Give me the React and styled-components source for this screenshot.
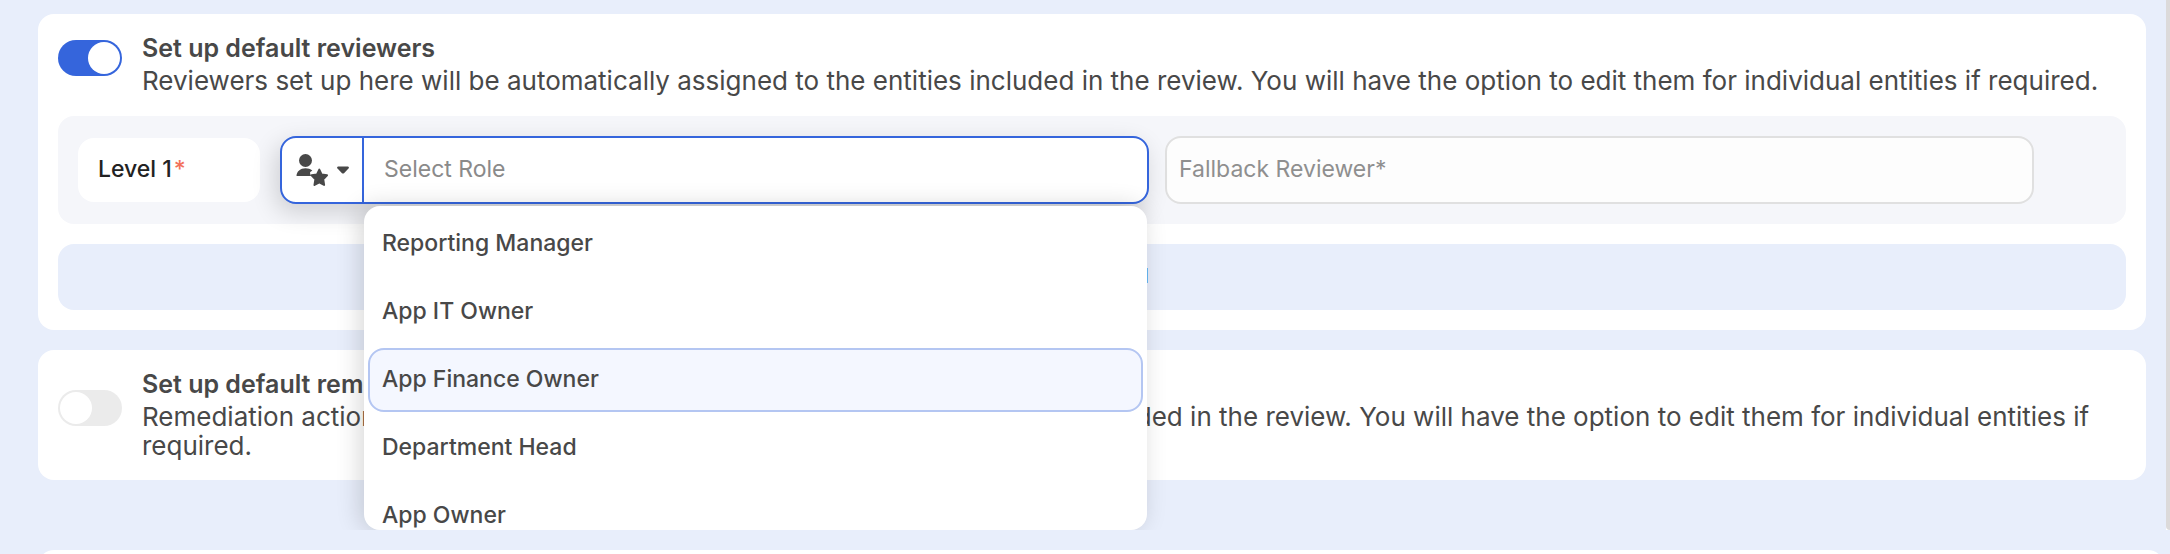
import styled, { createGlobalStyle } from "styled-components";

const roles = ["Reporting Manager", "App IT Owner", "App Finance Owner", "Department Head", "App Owner"];

const App = () => {
    return (
        <Page>
            <GlobalStyle />
            <ScrollArea>
                <Card>
                    <CardHeader>
                        <Toggle id="reviewers" defaultChecked />
                        <div>
                            <Title htmlFor="reviewers">Set up default reviewers</Title>
                            <Description>
                                Reviewers set up here will be automatically assigned to the entities included in the review. You will have the option to edit them for individual entities if required.
                            </Description>
                        </div>
                    </CardHeader>
                    <LevelPanel>
                        <LevelName>Level 1<Required>*</Required></LevelName>
                        <Fields>
                            <RoleField>
                                <TypeButton type="button" aria-label="Reviewer type">
                                    <UserStarIcon />
                                    <CaretIcon />
                                </TypeButton>
                                <RoleInput aria-label="Select Role" placeholder="Select Role" />
                                <Menu role="listbox">
                                    {roles.map((role) => (
                                        <Option key={role} role="option" aria-selected={role === "App Finance Owner"} $active={role === "App Finance Owner"}>
                                            {role}
                                        </Option>
                                    ))}
                                </Menu>
                            </RoleField>
                            <FallbackInput aria-label="Fallback Reviewer" placeholder="Fallback Reviewer*" />
                        </Fields>
                    </LevelPanel>
                    <AddButton type="button">+ Add Level</AddButton>
                </Card>
                <Card>
                    <CardHeader $center>
                        <Toggle id="remediations" />
                        <div>
                            <Title htmlFor="remediations">Set up default remediations</Title>
                            <Description>
                                Remediation action set up here will be automatically assigned to the entities included in the review. You will have the option to edit them for individual entities if required.
                            </Description>
                        </div>
                    </CardHeader>
                </Card>
                <ScrollTrack>
                    <ScrollThumb />
                </ScrollTrack>
            </ScrollArea>
            <Footer />
        </Page>
    );
};

const Toggle = (props) => <Switch type="checkbox" role="switch" {...props} />;

const UserStarIcon = () => (
    <svg width="32" height="36" viewBox="0 0 32 36" fill="#484848" aria-hidden="true">
        <circle cx="9.500" cy="8.500" r="6.500" />
        <path d="M0.500 24C0.500 19.500 4.500 16.200 9.500 16.200C12 16.200 14.500 17 16.300 18.500L15 19.500C13.500 20 14 21.500 15 24Z" />
        <path d="M23.300 17.600L25.700 22.600L31 23.300L27.200 27.200L28.100 32.900L23.300 30.300L18.500 32.900L19.400 27.200L15.600 23.300L20.900 22.600Z" stroke="#484848" strokeWidth="2" strokeLinejoin="round" />
    </svg>
);

const CaretIcon = () => (
    <svg width="14" height="8" viewBox="0 0 14 8" fill="#484848" aria-hidden="true">
        <path d="M2 0.500H12Q13.800 1 12.500 2.500L8 7.200Q7 8 6 7.200L1.500 2.500Q0.200 1 2 0.500Z" />
    </svg>
);

export default App;

const GlobalStyle = createGlobalStyle`
    * {
        box-sizing: border-box;
    }

    body {
        margin: 0;
        background-color: #e8eefb;
        color: #484848;
        font-family: Inter, sans-serif;
    }

    input, button {
        font: inherit;
        color: inherit;
    }
`;

const Page = styled.div`
    height: 100vh;
    display: flex;
    flex-direction: column;
    overflow: hidden;
`;

const ScrollArea = styled.main`
    position: relative;
    flex: 1;
    min-height: 0;
    overflow: hidden;
    display: flex;
    flex-direction: column;
    gap: 20px;
    padding: 14px 24px 0 38px;
`;

const ScrollTrack = styled.div`
    position: absolute;
    top: 0;
    bottom: 0;
    right: 0;
    width: 4px;
    background-color: white;
`;

const ScrollThumb = styled.div`
    height: 100%;
    border-radius: 0 0 0 6px;
    background-color: #dcdada;
`;

const Card = styled.section`
    flex-shrink: 0;
    background-color: white;
    border-radius: 16px;
    padding: 20px;
`;

const CardHeader = styled.div`
    display: flex;
    align-items: ${(props) => (props.$center ? "center" : "flex-start")};
    gap: 20px;
    padding-bottom: ${(props) => (props.$center ? "0" : "20px")};
`;

const Switch = styled.input`
    appearance: none;
    flex-shrink: 0;
    width: 64px;
    height: 36px;
    margin: 6px 0 20px;
    padding: 2px;
    border-radius: 18px;
    background-color: #ebebeb;
    display: flex;

    &::before {
        content: "";
        width: 32px;
        height: 32px;
        border-radius: 50%;
        background-color: white;
    }

    &:checked {
        background-color: #3565dc;
        justify-content: flex-end;
    }
`;

const Title = styled.label`
    display: block;
    font-size: 25px;
    font-weight: 600;
    line-height: 28px;
`;

const Description = styled.p`
    margin: 4px 0 0;
    font-size: 26px;
    line-height: 29px;
`;

const LevelPanel = styled.div`
    display: flex;
    align-items: center;
    gap: 20px;
    padding: 20px 92px 20px 20px;
    border-radius: 16px;
    background-color: #f5f6fa;
`;

const LevelName = styled.div`
    width: 182px;
    height: 64px;
    padding: 0 20px 2px;
    display: flex;
    align-items: center;
    border-radius: 16px;
    background-color: white;
    color: #222222;
    font-size: 23px;
    font-weight: 500;
`;

const Required = styled.span`
    margin-left: 2px;
    color: #f2715a;
`;

const Fields = styled.div`
    flex: 1;
    display: grid;
    grid-template-columns: 1fr 1fr;
    gap: 16px;
`;

const RoleField = styled.div`
    position: relative;
    display: flex;
    height: 68px;
    border: 2px solid #3565dc;
    border-radius: 16px;
    background-color: white;
    box-shadow: -4px 8px 24px rgba(0, 0, 0, 0.16);
`;

const TypeButton = styled.button`
    width: 82px;
    padding: 0 0 0 2px;
    display: flex;
    align-items: center;
    justify-content: center;
    gap: 8px;
    border: none;
    border-right: 2px solid #3565dc;
    background: none;
`;

const RoleInput = styled.input`
    flex: 1;
    min-width: 0;
    padding: 0 20px 2px;
    border: none;
    border-radius: 16px;
    background: none;
    font-size: 23px;

    &::placeholder {
        color: #8a8a8a;
    }
`;

const Menu = styled.ul`
    position: absolute;
    z-index: 1;
    top: 68px;
    left: 82px;
    right: 0;
    height: 324px;
    margin: 0;
    padding: 6px 4px;
    overflow: hidden;
    list-style: none;
    border-radius: 16px;
    background-color: white;
    box-shadow: -4px 0 24px rgba(0, 0, 0, 0.16);
`;

const Option = styled.li`
    height: 64px;
    margin-bottom: 4px;
    padding: 0 12px 2px;
    display: flex;
    align-items: center;
    border: 2px solid ${(props) => (props.$active ? "#b4c6f2" : "transparent")};
    border-radius: 16px;
    background-color: ${(props) => (props.$active ? "#f4f7ff" : "transparent")};
    font-size: 23px;
    font-weight: 500;
`;

const FallbackInput = styled.input`
    min-width: 0;
    height: 68px;
    padding: 0 12px 2px;
    border: 2px solid #e0e0e0;
    border-radius: 16px;
    background-color: #fdfdfd;
    font-size: 23px;

    &::placeholder {
        color: #8f8f8f;
    }
`;

const AddButton = styled.button`
    display: block;
    width: 100%;
    height: 66px;
    margin-top: 20px;
    padding: 0 0 2px;
    border: none;
    border-radius: 16px;
    background-color: #e8eefb;
    color: #3565dc;
    font-size: 20px;
    font-weight: 500;
`;

const Footer = styled.footer`
    flex-shrink: 0;
    height: 24px;
    margin: 20px 6px -20px 38px;
    border-radius: 16px 16px 0 0;
    background-color: white;
`;
